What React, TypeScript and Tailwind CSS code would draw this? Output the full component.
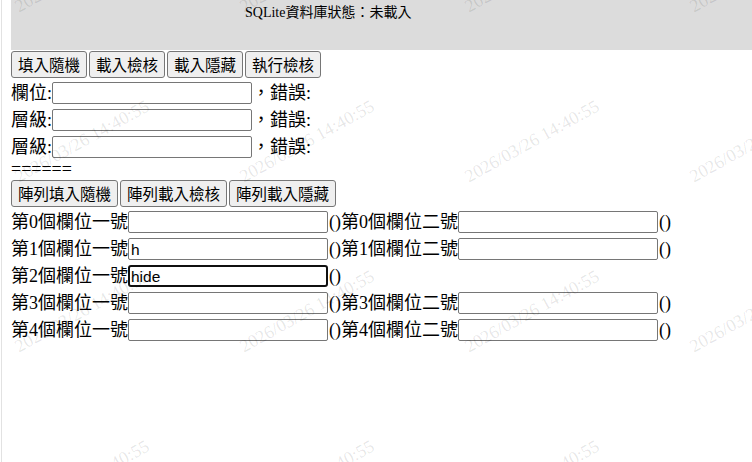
import React from "react";

const serif = "font-['Liberation_Serif','Noto_Sans_CJK_TC',serif]";

const topFields = ["欄位", "層級", "層級"];
const topButtons = ["填入隨機", "載入檢核", "載入隱藏", "執行檢核"];
const listButtons = ["陣列填入隨機", "陣列載入檢核", "陣列載入隱藏"];

const rows = [
  { a: "", b: "" as string | null },
  { a: "h", b: "" },
  { a: "hide", b: null, focus: true },
  { a: "", b: "" },
  { a: "", b: "" },
];

// watermark grid: every 225px across, 170px down
const marks: { x: number; y: number }[] = [];
for (let r = 0; r < 4; r++) {
  for (let c = 0; c < 4; c++) {
    marks.push({ x: 80 + c * 225, y: -29 + r * 170 });
  }
}

function Btn({ label }: { label: string }) {
  return (
    <button className="h-[27px] px-[6px] border border-[#767676] bg-[#efefef] rounded-[3px] text-[15.5px] text-black font-['Noto_Sans_CJK_TC',sans-serif] leading-none">
      {label}
    </button>
  );
}

function Field({ value, focus }: { value: string; focus?: boolean }) {
  return (
    <input
      readOnly
      value={value}
      className={`w-[200px] h-[22px] px-[2px] pt-[2px] bg-white text-black text-[15.5px] leading-[18px] font-['Liberation_Sans','Noto_Sans_CJK_TC',sans-serif] outline-none ${
        focus ? "border-2 border-[#101010] rounded-[3px] pl-[1px]" : "border border-[#767676] rounded-[2px]"
      }`}
    />
  );
}

export default function App() {
  return (
    <div className={`relative h-[462px] w-full overflow-hidden bg-white ml-[1px] border-l border-[#e2e2e2] ${serif} text-black`}>
      <div className="pl-[9px]">
        <div className="h-[50px] bg-[#dcdcdc] pl-[234px] pt-[5px] text-[14px] leading-[16px]">
          SQLite資料庫狀態：未載入
        </div>

        <div className="flex gap-[2px] mt-[1px]">
          {topButtons.map((b) => (
            <Btn key={b} label={b} />
          ))}
        </div>

        {topFields.map((f, i) => (
          <div key={i} className="flex items-center h-[27px] pt-[3px] text-[18px] leading-[21px]">
            <span>{f}:</span>
            <Field value="" />
            <span>，錯誤:</span>
          </div>
        ))}

        <div className="h-[21px] text-[18px] leading-[21px]">======</div>

        <div className="flex gap-[2px]">
          {listButtons.map((b) => (
            <Btn key={b} label={b} />
          ))}
        </div>

        {rows.map((r, i) => (
          <div key={i} className="flex items-center h-[27px] pt-[3px] text-[18px] leading-[21px]">
            <span>第{i}個欄位一號</span>
            <Field value={r.a} focus={r.focus} />
            <span className="ml-[1px]">()</span>
            {r.b !== null && (
              <>
                <span>第{i}個欄位二號</span>
                <Field value={r.b} />
                <span className="ml-[1px]">()</span>
              </>
            )}
          </div>
        ))}
      </div>

      {/* watermark overlay */}
      {marks.map((m, i) => (
        <span
          key={i}
          className="absolute whitespace-nowrap pointer-events-none text-[18px] leading-none text-[rgba(0,0,0,0.1)] font-['Liberation_Serif',serif]"
          style={{ left: m.x, top: m.y, transform: "translate(-50%, -50%) rotate(-29deg)" }}
        >
          2026/03/26 14:40:55
        </span>
      ))}
    </div>
  );
}
